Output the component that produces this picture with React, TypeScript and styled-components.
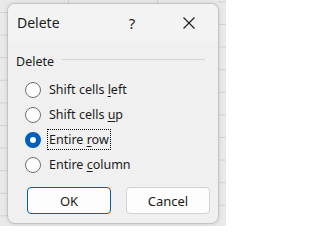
import styled, { createGlobalStyle } from 'styled-components';

const GlobalStyle = createGlobalStyle`
  html, body {
    margin: 0;
    padding: 0;
  }
  body {
    font-family: 'Segoe UI', 'Noto Sans', 'Liberation Sans', sans-serif;
    color: #1b1b1b;
  }
`;

type Option = {
  id: string;
  before: string;
  key: string;
  after: string;
};

const options: Option[] = [
  { id: 'left', before: 'Shift cells ', key: 'l', after: 'eft' },
  { id: 'up', before: 'Shift cells ', key: 'u', after: 'p' },
  { id: 'row', before: 'Entire ', key: 'r', after: 'ow' },
  { id: 'column', before: 'Entire ', key: 'c', after: 'olumn' },
];

const selected = 'row';

const App = () => {
  return (
    <>
      <GlobalStyle />
      <Backdrop>
        <Dialog>
          <TitleBar>
            <Title>Delete</Title>
            <HelpButton>?</HelpButton>
            <CloseButton>
              <svg width="12" height="12" viewBox="0 0 12 12">
                <path d="M0.5 0.5 L11.5 11.5 M11.5 0.5 L0.5 11.5" stroke="#1b1b1b" strokeWidth="1.1" />
              </svg>
            </CloseButton>
          </TitleBar>
          <Body>
            <GroupHeader>
              <GroupLabel>Delete</GroupLabel>
              <GroupRule />
            </GroupHeader>
            <RadioList>
              {options.map((o) => (
                <RadioRow key={o.id}>
                  <RadioCircle $checked={o.id === selected} />
                  <RadioLabel $focused={o.id === selected}>
                    {o.before}
                    <u>{o.key}</u>
                    {o.after}
                  </RadioLabel>
                </RadioRow>
              ))}
            </RadioList>
            <ButtonRow>
              <DialogButton $primary>OK</DialogButton>
              <DialogButton>Cancel</DialogButton>
            </ButtonRow>
          </Body>
        </Dialog>
      </Backdrop>
    </>
  );
};

const Backdrop = styled.div`
  width: 226px;
  height: 226px;
  box-sizing: border-box;
  padding: 3px 0 0 7px;
  overflow: hidden;
  background-color: #e9e9e9;
  background-image:
    linear-gradient(to bottom, #d2d2d2 1px, transparent 1px),
    linear-gradient(to bottom, #d2d2d2 1px, transparent 1px),
    linear-gradient(to right, #d2d2d2 1px, transparent 1px);
  background-size: 8px 22.6px, 8px 22.6px, 89px 4px;
  background-position: 0 12px, right 0 top 24px, 68px 0;
  background-repeat: repeat-y, repeat-y, repeat-x;
`;

const Dialog = styled.div`
  width: 212px;
  height: 221px;
  box-sizing: border-box;
  border: 1px solid #c4c4c4;
  border-radius: 8px;
  background: #f0f0f0;
  box-shadow: 0 0 4px rgba(0, 0, 0, 0.12);
  overflow: hidden;
  display: flex;
  flex-direction: column;
`;

const TitleBar = styled.div`
  height: 37px;
  flex: none;
  display: flex;
  align-items: center;
  background: #f3f3f3;
  padding-right: 9px;
`;

const Title = styled.div`
  flex: 1;
  padding-left: 9px;
  font-size: 14px;
`;

const HelpButton = styled.div`
  width: 36px;
  text-align: center;
  font-size: 15px;
  margin-right: 19px;
`;

const CloseButton = styled.div`
  width: 40px;
  display: flex;
  justify-content: center;
  align-items: center;
`;

const Body = styled.div`
  flex: 1;
  display: flex;
  flex-direction: column;
  padding: 11px 8px 9px 8px;
`;

const GroupHeader = styled.div`
  display: flex;
  align-items: center;
  gap: 8px;
  height: 18px;
`;

const GroupLabel = styled.div`
  font-size: 12.5px;
`;

const GroupRule = styled.div`
  flex: 1;
  height: 1px;
  margin-top: -3px;
  margin-right: 5px;
  background: #d6d6d6;
`;

const RadioList = styled.div`
  display: flex;
  flex-direction: column;
  margin-top: 7px;
  padding-left: 9px;
`;

const RadioRow = styled.div`
  height: 25px;
  display: flex;
  align-items: center;
  gap: 6px;
`;

const RadioCircle = styled.div<{ $checked?: boolean }>`
  width: 16px;
  height: 16px;
  box-sizing: border-box;
  border-radius: 50%;
  flex: none;
  border: ${(p) => (p.$checked ? '5px solid #005fb8' : '1px solid #6f6f6f')};
  background: #ffffff;
`;

const RadioLabel = styled.span<{ $focused?: boolean }>`
  font-size: 12.5px;
  line-height: 19px;
  padding: 0 1px;
  border: 1px dotted ${(p) => (p.$focused ? '#000000' : 'transparent')};

  u {
    text-underline-offset: 2px;
  }
`;

const ButtonRow = styled.div`
  margin-top: auto;
  display: flex;
  gap: 15px;
  padding-left: 11px;
`;

const DialogButton = styled.button<{ $primary?: boolean }>`
  width: 84px;
  height: 27px;
  box-sizing: border-box;
  border-radius: 4px;
  background: #fdfdfd;
  border: 1px solid ${(p) => (p.$primary ? '#005fb8' : '#d2d2d2')};
  font-family: inherit;
  font-size: 13px;
  color: #1b1b1b;
  padding: 0;
`;

export default App;
